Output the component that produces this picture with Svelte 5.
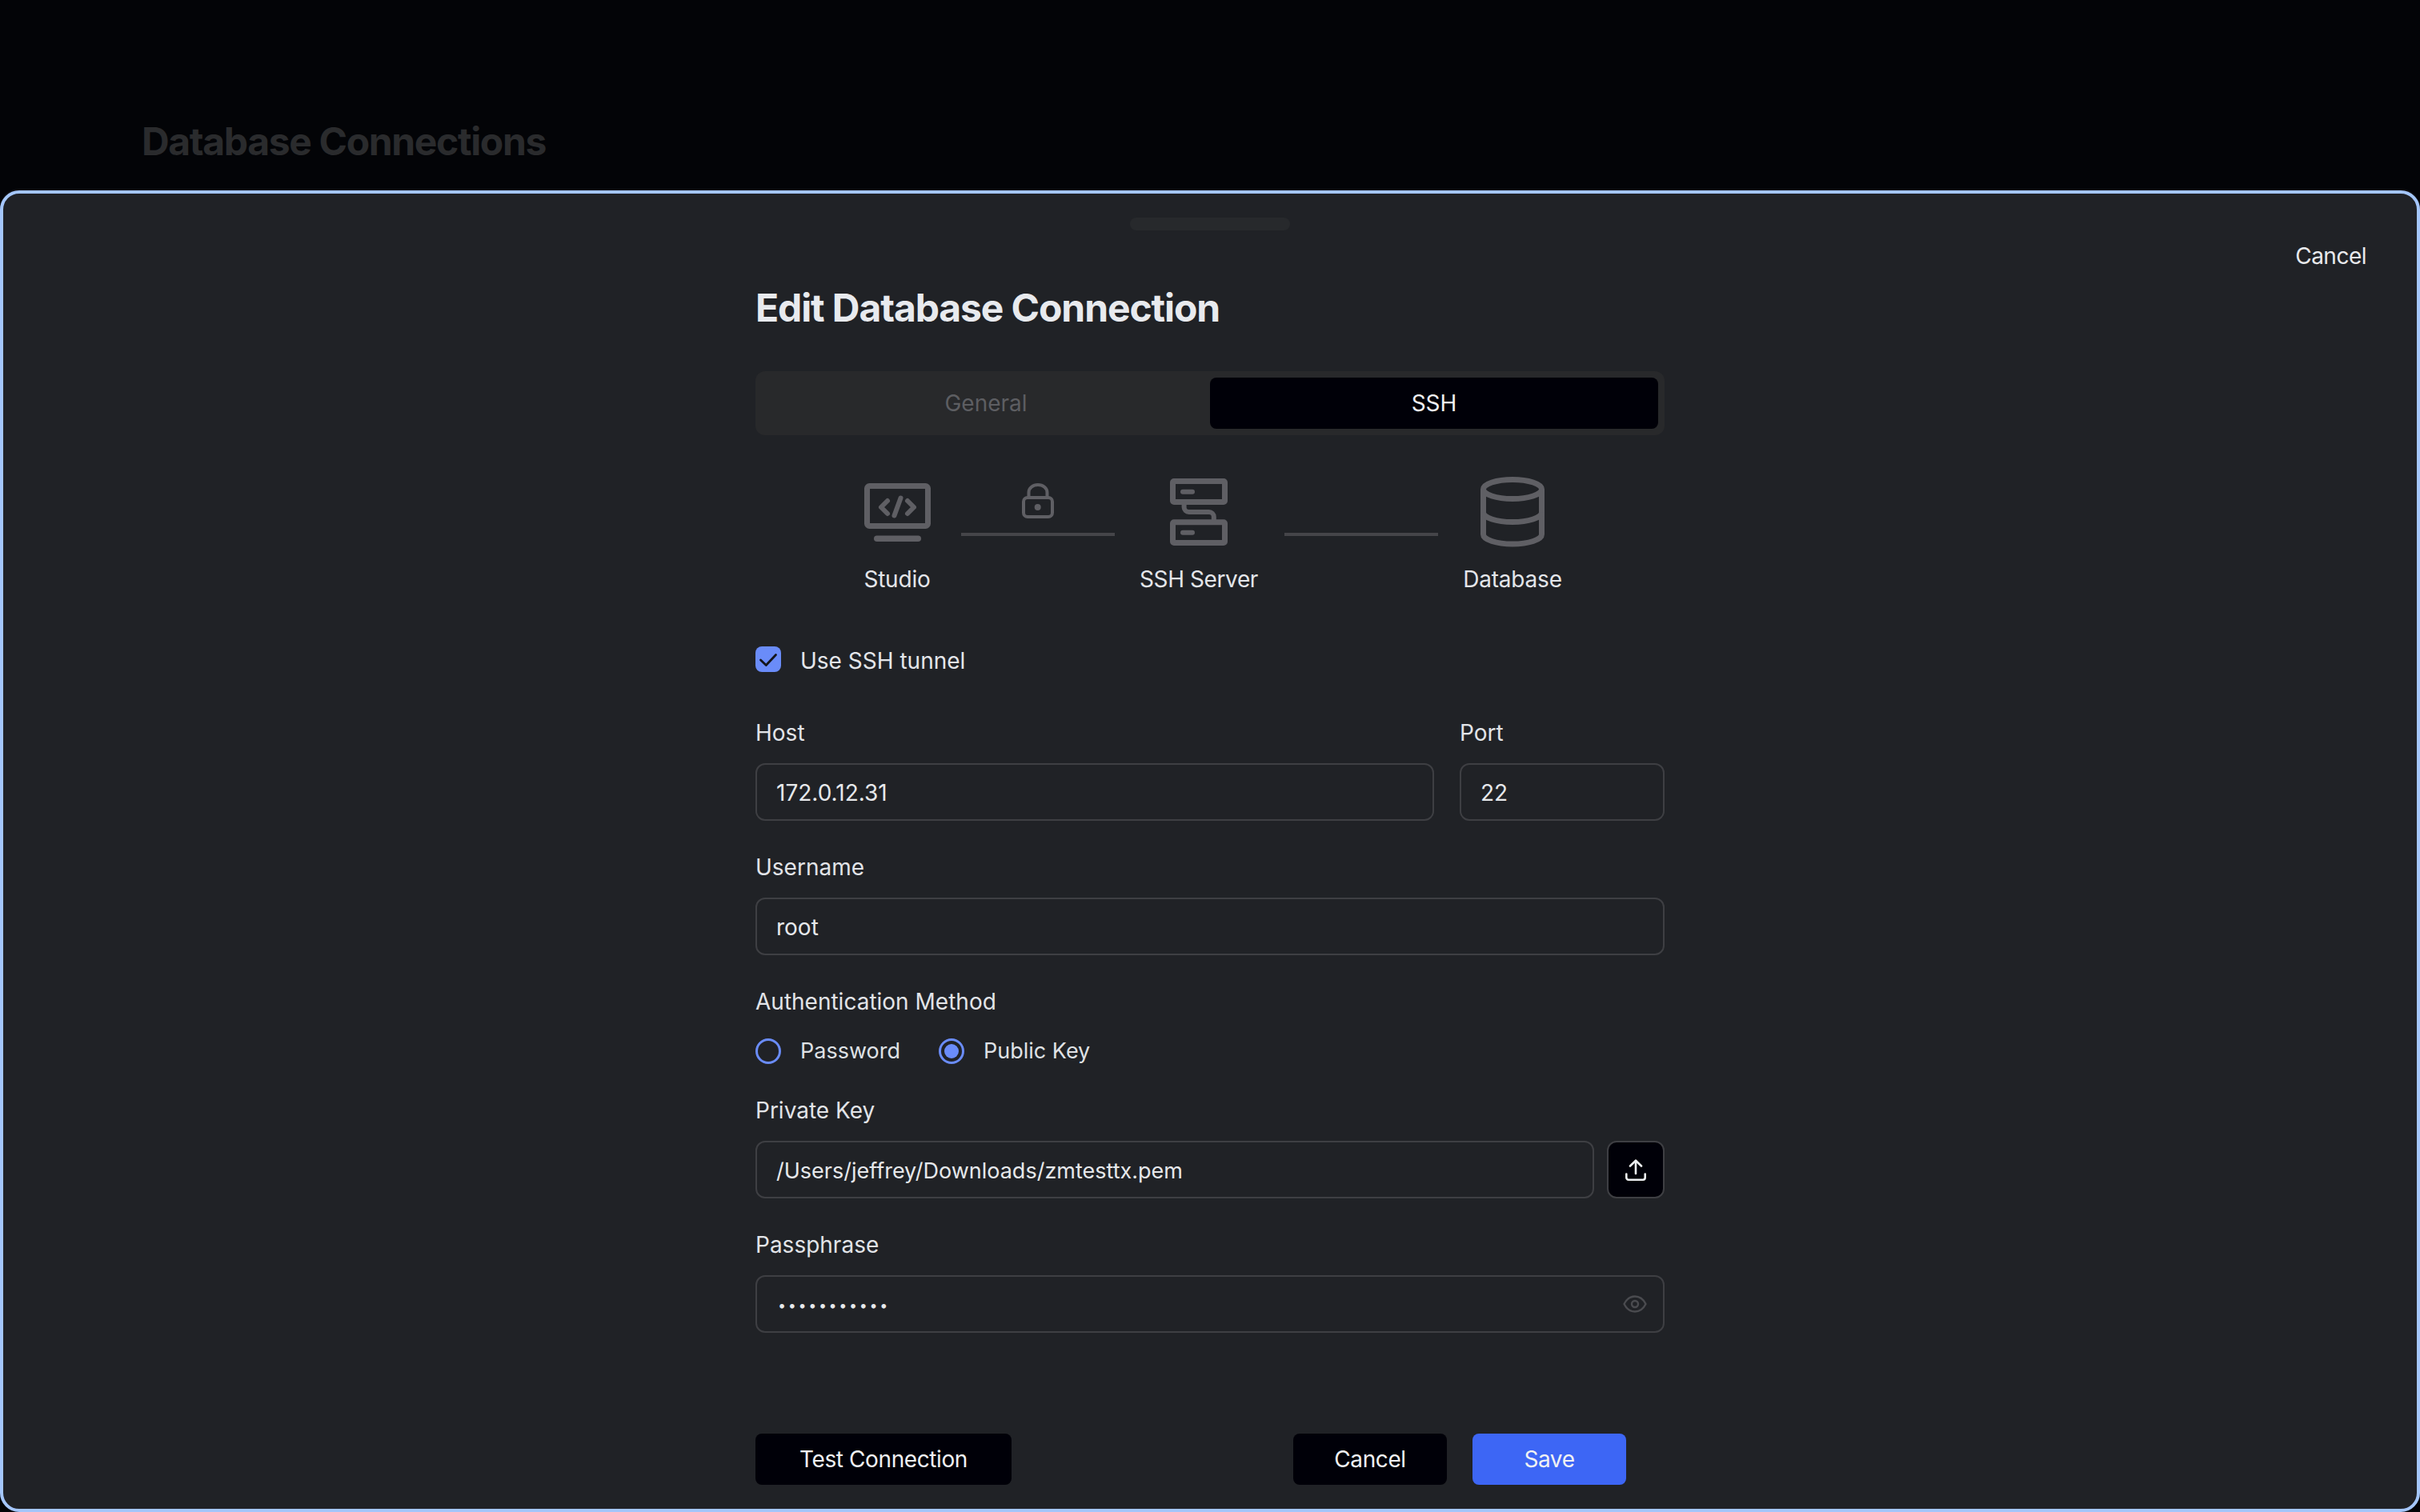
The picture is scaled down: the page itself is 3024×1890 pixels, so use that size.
<script>
  const tabs = ['General', 'SSH'];
</script>

<div class="page">
  <header class="behind">
    <h1>Database Connections</h1>
  </header>

  <section class="sheet">
    <div class="handle"></div>
    <div class="topbar"><button class="link">Cancel</button></div>

    <div class="form">
      <h2>Edit Database Connection</h2>

      <div class="tabs">
        {#each tabs as t}
          <div class="tab" class:active={t === 'SSH'}>{t}</div>
        {/each}
      </div>

      <div class="diagram">
        <div class="node studio">
          <div class="nicon">
            <svg width="83" height="73" viewBox="0 0 83 73" fill="none" stroke="#5f5f64" stroke-width="7">
              <rect x="3.5" y="3.5" width="76" height="50" rx="3"/>
              <rect x="12" y="65.5" width="59" height="7.5" rx="3.75" fill="#5f5f64" stroke="none"/>
              <g stroke-width="6" stroke-linecap="round" stroke-linejoin="round">
                <path d="M29 22 21 30 29 38"/>
                <path d="M54 22 62 30 54 38"/>
                <path d="M45.5 18.5 37.5 40.5"/>
              </g>
            </svg>
          </div>
          <span>Studio</span>
        </div>

        <div class="link-line">
          <svg class="lock" width="40" height="44" viewBox="0 0 40 44" fill="none" stroke="#5f5f64" stroke-width="4">
            <rect x="2" y="18" width="36" height="24" rx="5"/>
            <path d="M8.5 17V11.5a11.5 9.5 0 0 1 23 0V17"/>
            <circle cx="19.7" cy="30" r="4" fill="#5f5f64" stroke="none"/>
          </svg>
          <div class="bar"></div>
        </div>

        <div class="node server">
          <div class="nicon">
            <svg width="72" height="84" viewBox="0 0 72 84" fill="none" stroke="#5f5f64" stroke-width="7">
              <rect x="3.5" y="3.5" width="65" height="26" rx="1.5"/>
              <rect x="3.5" y="54.8" width="65" height="25.7" rx="1.5"/>
              <rect x="13" y="13.7" width="18" height="6" rx="3" fill="#5f5f64" stroke="none"/>
              <rect x="13" y="64.7" width="18" height="6" rx="3" fill="#5f5f64" stroke="none"/>
              <path d="M17.6 31V36a6 6 0 0 0 6 6H48.8a6 6 0 0 1 6 6V53" stroke-width="6"/>
            </svg>
          </div>
          <span>SSH Server</span>
        </div>

        <div class="link-line">
          <div class="bar"></div>
        </div>

        <div class="node db">
          <div class="nicon">
            <svg width="80" height="88" viewBox="0 0 80 88" fill="none" stroke="#5f5f64" stroke-width="7">
              <ellipse cx="40" cy="15.5" rx="36.5" ry="12"/>
              <path d="M3.5 15.5V72A36.5 12 0 0 0 76.5 72V15.5"/>
              <path d="M3.5 44.5A36.5 12 0 0 0 76.5 44.5"/>
            </svg>
          </div>
          <span>Database</span>
        </div>
      </div>

      <label class="check">
        <span class="box">
          <svg width="32" height="32" viewBox="0 0 32 32" fill="none" stroke="#14151a" stroke-width="2.8" stroke-linecap="round" stroke-linejoin="round">
            <path d="M6.5 17 13.3 23.5 25.5 10.5"/>
          </svg>
        </span>
        Use SSH tunnel
      </label>

      <div class="row">
        <div class="field grow">
          <div class="label">Host</div>
          <input value="172.0.12.31" />
        </div>
        <div class="field port">
          <div class="label">Port</div>
          <input value="22" />
        </div>
      </div>

      <div class="field">
        <div class="label">Username</div>
        <input value="root" />
      </div>

      <div class="field">
        <div class="label">Authentication Method</div>
        <div class="radios">
          <label class="radio"><span class="dot"></span>Password</label>
          <label class="radio"><span class="dot on"></span>Public Key</label>
        </div>
      </div>

      <div class="field after-radios">
        <div class="label">Private Key</div>
        <div class="keyrow">
          <input class="path" value="/Users/jeffrey/Downloads/zmtesttx.pem" />
          <button class="upload" aria-label="Upload">
            <svg width="26" height="27" viewBox="0 0 26 27" fill="none" stroke="#eceef0" stroke-width="2.6" stroke-linecap="round" stroke-linejoin="round">
              <path d="M13 2V18"/>
              <path d="M6 8.5 13 1.7 20 8.5"/>
              <path d="M1.3 18.5V23a2.7 2.7 0 0 0 2.7 2.7H22a2.7 2.7 0 0 0 2.7-2.7V18.5"/>
            </svg>
          </button>
        </div>
      </div>

      <div class="field">
        <div class="label">Passphrase</div>
        <div class="secret">
          <input type="password" value="abcdefghijk" />
          <svg class="eye" width="30" height="22" viewBox="0 0 30 22" fill="none" stroke="#4a4b4f" stroke-width="2.4">
            <path d="M1.5 11C4.5 5 9 1.5 15 1.5S25.5 5 28.5 11C25.5 17 21 20.5 15 20.5S4.5 17 1.5 11Z" stroke-linejoin="round"/>
            <circle cx="15" cy="11" r="4"/>
          </svg>
        </div>
      </div>

      <div class="actions">
        <button class="btn test">Test Connection</button>
        <div class="right">
          <button class="btn wide">Cancel</button>
          <button class="btn wide save">Save</button>
        </div>
      </div>
    </div>
  </section>
</div>

<style>
  :global(body) {
    margin: 0;
    background: #030407;
    font-family: Inter, "Noto Sans", sans-serif;
  }
  .page {
    height: 1890px;
    overflow: hidden;
    display: flex;
    flex-direction: column;
  }
  .behind {
    height: 238px;
    box-sizing: border-box;
    padding: 147px 0 0 177px;
    flex: none;
  }
  h1 {
    margin: 0;
    font-size: 48px;
    line-height: 60px;
    font-weight: 700;
    letter-spacing: -1.35px;
    color: #2a2b2d;
  }
  .sheet {
    flex: 1;
    min-height: 0;
    box-sizing: border-box;
    border: 4px solid #a4c6fb;
    border-radius: 24px;
    background: #202226;
    box-shadow: 0 -2px 0 #101114;
    padding-top: 30px;
    color: #e4e6ea;
    font-size: 28px;
    line-height: 40px;
  }
  .handle {
    width: 200px;
    height: 16px;
    margin: 0 auto;
    border-radius: 8px;
    background: #27292c;
  }
  .topbar {
    display: flex;
    justify-content: flex-end;
    padding: 12px 63px 0 0;
  }
  button {
    font: inherit;
    color: inherit;
    border: 0;
    background: none;
    padding: 0;
  }
  .link { color: #e8e9ec; letter-spacing: -0.5px; }
  .form {
    width: 1136px;
    margin: 15px auto 0;
    display: flex;
    flex-direction: column;
  }
  h2 {
    margin: 0 0 49px;
    font-size: 48px;
    line-height: 60px;
    font-weight: 700;
    letter-spacing: -1.1px;
    color: #e8eaee;
  }
  .tabs {
    display: grid;
    grid-template-columns: 1fr 1fr;
    height: 80px;
    box-sizing: border-box;
    padding: 8px;
    border-radius: 12px;
    background: #28292b;
  }
  .tab {
    display: flex;
    align-items: center;
    justify-content: center;
    color: #5d5e62;
    border-radius: 8px;
  }
  .tab.active {
    background: #000008;
    color: #f0f1f3;
  }
  .diagram {
    display: flex;
    align-items: flex-start;
    gap: 32px;
    margin-top: 52px;
    padding-left: 134px;
    height: 156px;
  }
  .node {
    display: flex;
    flex-direction: column;
    align-items: center;
    flex: none;
    letter-spacing: -0.2px;
    white-space: nowrap;
  }
  .studio { width: 86px; margin-right: 5px; }
  .server { width: 146px; margin-right: 2px; letter-spacing: -0.4px; }
  .db { width: 122px; }
  .nicon {
    height: 88px;
    display: flex;
    align-items: center;
    margin-bottom: 20px;
  }
  .link-line {
    width: 192px;
    flex: none;
    display: flex;
    flex-direction: column;
    align-items: center;
  }
  .lock { margin-top: 8px; }
  .bar {
    width: 192px;
    height: 4px;
    background: #454549;
    margin-top: 70px;
  }
  .lock + .bar { margin-top: 18px; }
  .check {
    display: flex;
    align-items: center;
    gap: 24px;
    margin-top: 54px;
    height: 40px;
  }
  .box {
    width: 32px;
    height: 32px;
    border-radius: 8px;
    background: #6a8cf9;
    display: block;
    margin-top: -4px;
  }
  .box svg { display: block; }
  .row {
    display: flex;
    gap: 32px;
    margin-top: 50px;
  }
  .field { display: flex; flex-direction: column; margin-top: 38px; }
  .row .field { margin-top: 0; }
  .field.after-radios { margin-top: 34px; }
  .grow { flex: 1; }
  .port { width: 256px; flex: none; }
  .label {
    height: 40px;
    margin-bottom: 18px;
    color: #e2e4e8;
  }
  input {
    box-sizing: border-box;
    width: 100%;
    height: 72px;
    padding: 2px 24px 0;
    border: 2.5px solid #3e3f43;
    border-radius: 12px;
    background: transparent;
    color: #e6e8eb;
    font: inherit;
    outline: none;
  }
  input.path { font-size: 27px; }
  input[type="password"] {
    font-size: 18px;
    letter-spacing: 2.6px;
    padding-left: 26px;
  }
  .radios {
    display: flex;
    gap: 48px;
    margin-top: 4px;
    height: 40px;
  }
  .radio {
    display: flex;
    align-items: center;
    gap: 24px;
    color: #dfe1e5;
    font-size: 27px;
  }
  .dot {
    width: 32px;
    height: 32px;
    box-sizing: border-box;
    border: 3px solid #6a8cf9;
    border-radius: 50%;
    display: flex;
    align-items: center;
    justify-content: center;
  }
  .dot.on::after {
    content: "";
    width: 18px;
    height: 18px;
    border-radius: 50%;
    background: #6a8cf9;
  }
  .keyrow {
    display: flex;
    gap: 16px;
  }
  .keyrow input { flex: 1; min-width: 0; }
  .upload {
    width: 72px;
    height: 72px;
    flex: none;
    box-sizing: border-box;
    border: 2.5px solid #3e3f43;
    border-radius: 12px;
    background: #000008;
    display: flex;
    align-items: center;
    justify-content: center;
  }
  .secret { position: relative; }
  .eye {
    position: absolute;
    right: 22px;
    top: 25px;
  }
  .actions {
    display: flex;
    justify-content: space-between;
    margin-top: 126px;
    padding-right: 48px;
  }
  .right { display: flex; gap: 32px; }
  .btn {
    height: 64px;
    border-radius: 8px;
    background: #000008;
    color: #f0f1f3;
    letter-spacing: -0.4px;
  }
  .test { width: 320px; }
  .wide { width: 192px; }
  .save { background: #3d66f5; }
</style>
